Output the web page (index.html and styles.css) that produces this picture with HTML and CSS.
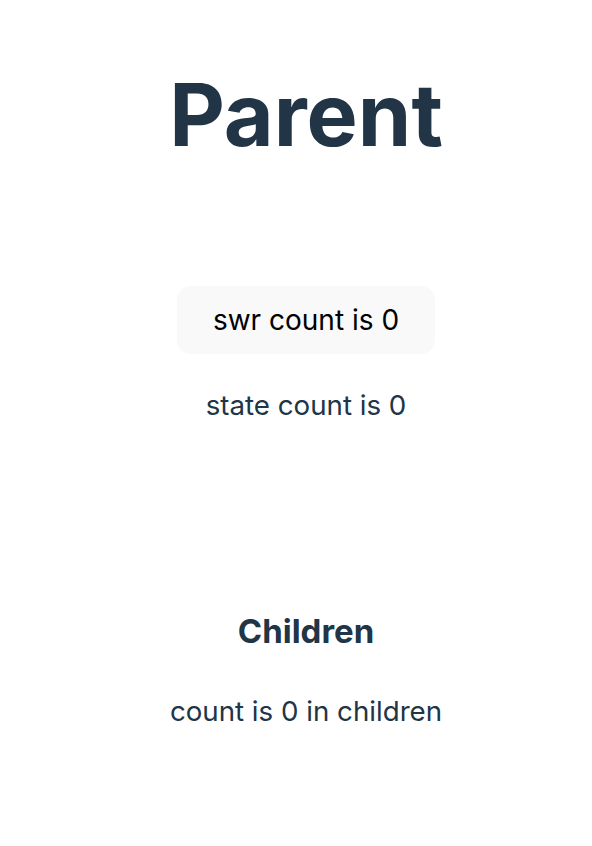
FILE: index.html
```html
<!DOCTYPE html>
<html lang="en">
<head>
    <meta charset="UTF-8">
    <meta name="viewport" content="width=device-width, initial-scale=1.0">
    <title>Parent</title>
    <link rel="stylesheet" href="styles.css">
</head>
<body>
    <div id="root">
        <h1>Parent</h1>
        <div class="card">
            <button type="button">swr count is 0</button>
            <p>state count is 0</p>
        </div>
        <div class="children">
            <h2>Children</h2>
            <p>count is 0 in children</p>
        </div>
    </div>
</body>
</html>
```

FILE: styles.css
```css
body { margin: 0; font-family: Inter, "Noto Sans", sans-serif; font-size: 27.7px; line-height: 1.5; font-weight: 400; color: #213547; background-color: #ffffff; }
#root { text-align: center; padding: 68px 0 0 20px; }
h1 { font-size: 86px; line-height: 1.1; margin: 0 0 123px; font-weight: 700; }
.card p { margin: 31px 0 0; }
button { font-family: inherit; font-size: 28px; font-weight: 400; color: #000; background-color: #f9f9f9; border: 1px solid transparent; border-radius: 14px; padding: 0 35px; height: 68px; cursor: pointer; }
.children { margin-top: 181px; }
h2 { font-size: 33px; line-height: 1.5; margin: 0; font-weight: 700; }
.children p { margin: 34px 0 0; }
```
